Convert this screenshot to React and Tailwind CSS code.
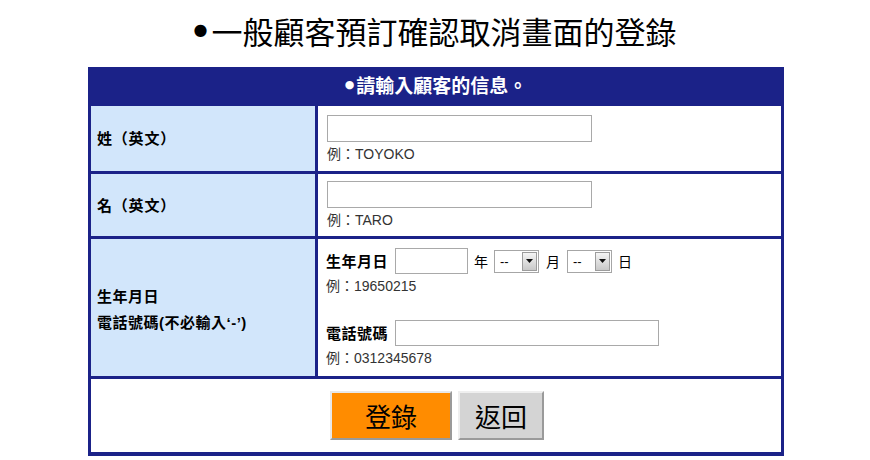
import React from "react";

const CJK = { fontFamily: '"Noto Sans CJK TC", "Noto Sans CJK SC", sans-serif' };
const MIX = { fontFamily: '"Liberation Sans", "Noto Sans CJK TC", sans-serif' };
const DOT = { fontFamily: '"DejaVu Sans", sans-serif' };

function Select() {
  return (
    <div className="flex h-[23px] w-[45px] border border-[#a6a6a6] bg-white">
      <div className="flex flex-1 items-center pl-[5px] text-[13px] leading-none text-black" style={MIX}>--</div>
      <div className="m-[1px] flex w-[15px] items-center justify-center border border-[#9c9c9c] bg-gradient-to-b from-[#f5f5f5] to-[#c9c9c9]">
        <svg width="7" height="4" viewBox="0 0 7 4"><path d="M0 0h7L3.5 4z" fill="#111" /></svg>
      </div>
    </div>
  );
}

function Example({ children }) {
  return (
    <div className="mt-[4px] text-[14px] leading-[17px] text-[#333]" style={MIX}>
      例：{children}
    </div>
  );
}

export default function App() {
  return (
    <div lang="zh-TW" className="flex h-[460px] w-[870px] flex-col items-center bg-white">
      <div className="mt-[12px] flex h-[36px] items-center text-[31px] leading-none text-black" style={CJK}>
        <span className="mr-[4px] text-[16px]" style={DOT}>●</span>
        一般顧客預訂確認取消畫面的登錄
      </div>
      <div className="ml-[2px] mt-[19px] flex w-[696px] flex-col gap-[3px] bg-[#1b2288] px-[3px] pb-[4px]">
        <div className="flex h-[36px] items-center justify-center text-[19px] font-bold text-white" style={CJK}>
          <span className="mr-[2px] text-[11px]" style={DOT}>●</span>
          請輸入顧客的信息。
        </div>
        <div className="flex h-[65px] gap-[3px]">
          <div className="flex w-[224px] items-center bg-[#d2e6fb] pl-[6px] text-[15px] font-bold tracking-[0.8px] text-black" style={CJK}>姓（英文）</div>
          <div className="flex flex-1 flex-col justify-center bg-white pl-[9px]">
            <div className="h-[27px] w-[265px] border border-[#a9a9a9] bg-white" />
            <Example>TOYOKO</Example>
          </div>
        </div>
        <div className="flex h-[62px] gap-[3px]">
          <div className="flex w-[224px] items-center bg-[#d2e6fb] pl-[6px] text-[15px] font-bold tracking-[0.8px] text-black" style={CJK}>名（英文）</div>
          <div className="flex flex-1 flex-col justify-center bg-white pl-[9px]">
            <div className="h-[27px] w-[265px] border border-[#a9a9a9] bg-white" />
            <Example>TARO</Example>
          </div>
        </div>
        <div className="flex h-[137px] gap-[3px]">
          <div className="flex w-[224px] flex-col justify-center bg-[#d2e6fb] pl-[6px] pt-[4px] text-[15px] font-bold leading-[26px] tracking-[0.5px] text-black" style={MIX}>
            <div>生年月日</div>
            <div>電話號碼(不必輸入‘-’)</div>
          </div>
          <div className="flex flex-1 flex-col justify-center bg-white pl-[8px]">
            <div className="flex items-center text-[14px] text-black" style={CJK}>
              <span className="mr-[7px] text-[15px] font-bold tracking-[0.5px]">生年月日</span>
              <div className="h-[26px] w-[73px] border border-[#a9a9a9]" />
              <span className="mx-[6px]">年</span>
              <Select />
              <span className="mx-[7px]">月</span>
              <Select />
              <span className="mx-[6px]">日</span>
            </div>
            <Example>19650215</Example>
            <div className="mt-[25px] flex items-center text-black" style={CJK}>
              <span className="mr-[7px] text-[15px] font-bold tracking-[0.5px]">電話號碼</span>
              <div className="h-[26px] w-[264px] border border-[#a9a9a9]" />
            </div>
            <Example>0312345678</Example>
          </div>
        </div>
        <div className="flex h-[73px] items-center justify-center gap-[6px] bg-white pl-[2px]">
          <div className="flex h-[49px] w-[122px] items-center justify-center border-2 border-t-[#e8e8e8] border-l-[#e8e8e8] border-b-[#9a9a9a] border-r-[#9a9a9a] bg-[#ff8c00] text-[26px] text-black" style={CJK}>登錄</div>
          <div className="flex h-[49px] w-[86px] items-center justify-center border-2 border-t-[#efefef] border-l-[#efefef] border-b-[#9a9a9a] border-r-[#9a9a9a] bg-[#d4d4d4] text-[26px] text-black" style={CJK}>返回</div>
        </div>
      </div>
    </div>
  );
}
